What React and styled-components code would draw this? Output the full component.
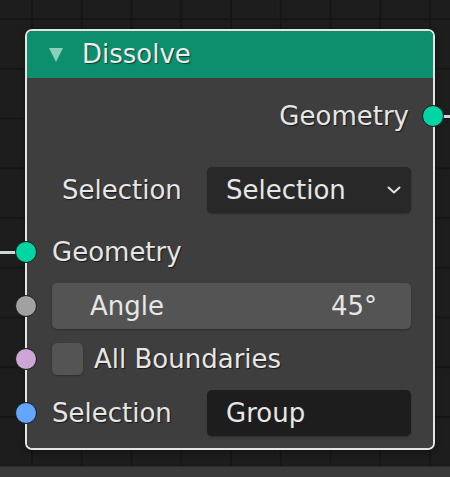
import styled, { createGlobalStyle } from "styled-components";

const Global = createGlobalStyle`
    html, body {
        margin: 0;
        padding: 0;
        background: #1d1d1d;
    }
    * {
        box-sizing: border-box;
    }
`

const SOCKETS = {
    geometry: '#00d6a3',
    float: '#a1a1a1',
    bool: '#cca6d6',
    field: '#63a5ff',
};

function Socket({ color, side }) {
    return <Dot color={color} $side={side} />;
}

function Chevron() {
    return (
        <svg width="14" height="10" viewBox="0 0 14 10">
            <polyline points="1.5,2.5 7,7.5 12.5,2.5" fill="none" stroke="#e2e2e2" strokeWidth="2" strokeLinecap="round" strokeLinejoin="round" />
        </svg>
    );
}

export default function App() {
    return (
        <>
            <Global />
            <Canvas>
                <Link $side="left" $top={251} />
                <Link $side="right" $top={115} />
                <Node>
                    <Header>
                        <Arrow />
                        <Title>Dissolve</Title>
                    </Header>
                    <Body>
                        <Row $mt={15} $justify="flex-end">
                            <Label $pr={2}>Geometry</Label>
                            <Socket color={SOCKETS.geometry} side="right" />
                        </Row>

                        <Row $mt={28}>
                            <Label $width={155} $pl={10}>Selection</Label>
                            <Field $variant="menu">
                                <span>Selection</span>
                                <Chevron />
                            </Field>
                        </Row>

                        <Row $mt={16}>
                            <Socket color={SOCKETS.geometry} side="left" />
                            <Label>Geometry</Label>
                        </Row>

                        <Row $mt={8}>
                            <Socket color={SOCKETS.float} side="left" />
                            <Field $variant="slider">
                                <span>Angle</span>
                                <span>45°</span>
                            </Field>
                        </Row>

                        <Row $mt={7}>
                            <Socket color={SOCKETS.bool} side="left" />
                            <Check />
                            <Label>All Boundaries</Label>
                        </Row>

                        <Row $mt={8}>
                            <Socket color={SOCKETS.field} side="left" />
                            <Label $width={155}>Selection</Label>
                            <Field $variant="text">
                                <span>Group</span>
                            </Field>
                        </Row>
                    </Body>
                </Node>
                <Footer />
            </Canvas>
        </>
    );
}

const Canvas = styled.div`
    position: relative;
    width: 450px;
    height: 477px;
    overflow: hidden;
    padding: 29px 0 0 25px;
    display: flex;
    flex-direction: column;
    font-family: "DejaVu Sans", "Liberation Sans", sans-serif;
    background-color: #1d1d1d;
    background-image:
        linear-gradient(to right, #161616 2px, transparent 2px),
        linear-gradient(to bottom, #161616 2px, transparent 2px);
    background-size: 49.75px 49.75px;
    background-position: 31px 18px;
`

const Link = styled.div`
    position: absolute;
    top: ${p => p.$top}px;
    ${p => p.$side === 'left' ? 'left: 0; width: 18px;' : 'left: 440px; width: 12px;'}
    height: 3px;
    background: #d4d4d4;
`

const Node = styled.div`
    position: relative;
    width: 410px;
    height: 421px;
    border: 2px solid #e4e4e4;
    border-radius: 7px;
    display: flex;
    flex-direction: column;
    box-shadow: 0 2px 6px rgba(0, 0, 0, 0.35);
`

const Header = styled.div`
    height: 47px;
    background: #0d8f6d;
    border-radius: 5px 5px 0 0;
    display: flex;
    align-items: center;
    padding-left: 22px;
    padding-bottom: 2px;
    gap: 19px;
`

const Arrow = styled.div`
    width: 0;
    height: 0;
    border-left: 7.5px solid transparent;
    border-right: 7.5px solid transparent;
    border-top: 14px solid #8acfbb;
    margin-top: 2px;
`

const Title = styled.span`
    font-size: 26px;
    color: #ececec;
    text-shadow: 1px 1px 1px rgba(0, 0, 0, 0.55);
`

const Body = styled.div`
    flex: 1;
    background: rgba(66, 66, 66, 0.9);
    border-radius: 0 0 5px 5px;
    padding: 0 22px 0 25px;
    display: flex;
    flex-direction: column;
`

const Row = styled.div`
    position: relative;
    height: 46px;
    margin-top: ${p => p.$mt || 0}px;
    display: flex;
    align-items: center;
    justify-content: ${p => p.$justify || 'flex-start'};
`

const Dot = styled.div`
    position: absolute;
    top: 50%;
    ${p => p.$side === 'left' ? 'left: -37px;' : 'right: -33px;'}
    width: 22px;
    height: 22px;
    margin-top: -11px;
    border-radius: 50%;
    background: ${p => p.color};
    border: 1.5px solid #1b1b1b;
`

const Label = styled.span`
    font-size: 26px;
    color: #e6e6e6;
    text-shadow: 1px 1px 1px rgba(0, 0, 0, 0.6);
    white-space: nowrap;
    flex: 0 0 ${p => p.$width ? `${p.$width}px` : 'auto'};
    padding-left: ${p => p.$pl || 0}px;
    padding-right: ${p => p.$pr || 0}px;
`

const Field = styled.div`
    flex: 1;
    height: 46px;
    border-radius: 5px;
    display: flex;
    align-items: center;
    font-size: 26px;
    color: #e6e6e6;
    white-space: nowrap;
    background: ${p => p.$variant === 'slider' ? '#545454' : p.$variant === 'menu' ? '#282828' : '#1d1d1d'};
    padding: ${p => p.$variant === 'slider' ? '0 34px 0 38px' : p.$variant === 'menu' ? '0 10px 0 19px' : '0 19px'};
    justify-content: ${p => p.$variant === 'text' ? 'flex-start' : 'space-between'};
    box-shadow: 0 1px 2px rgba(0, 0, 0, 0.3);
`

const Check = styled.div`
    width: 31px;
    height: 32px;
    border-radius: 5px;
    background: #545454;
    margin-right: 11px;
    box-shadow: 0 1px 2px rgba(0, 0, 0, 0.3);
`

const Footer = styled.div`
    position: absolute;
    left: 0;
    right: 0;
    bottom: 0;
    height: 11px;
    background: #3a3a3a;
    border-top: 1px solid #2a2a2a;
`
